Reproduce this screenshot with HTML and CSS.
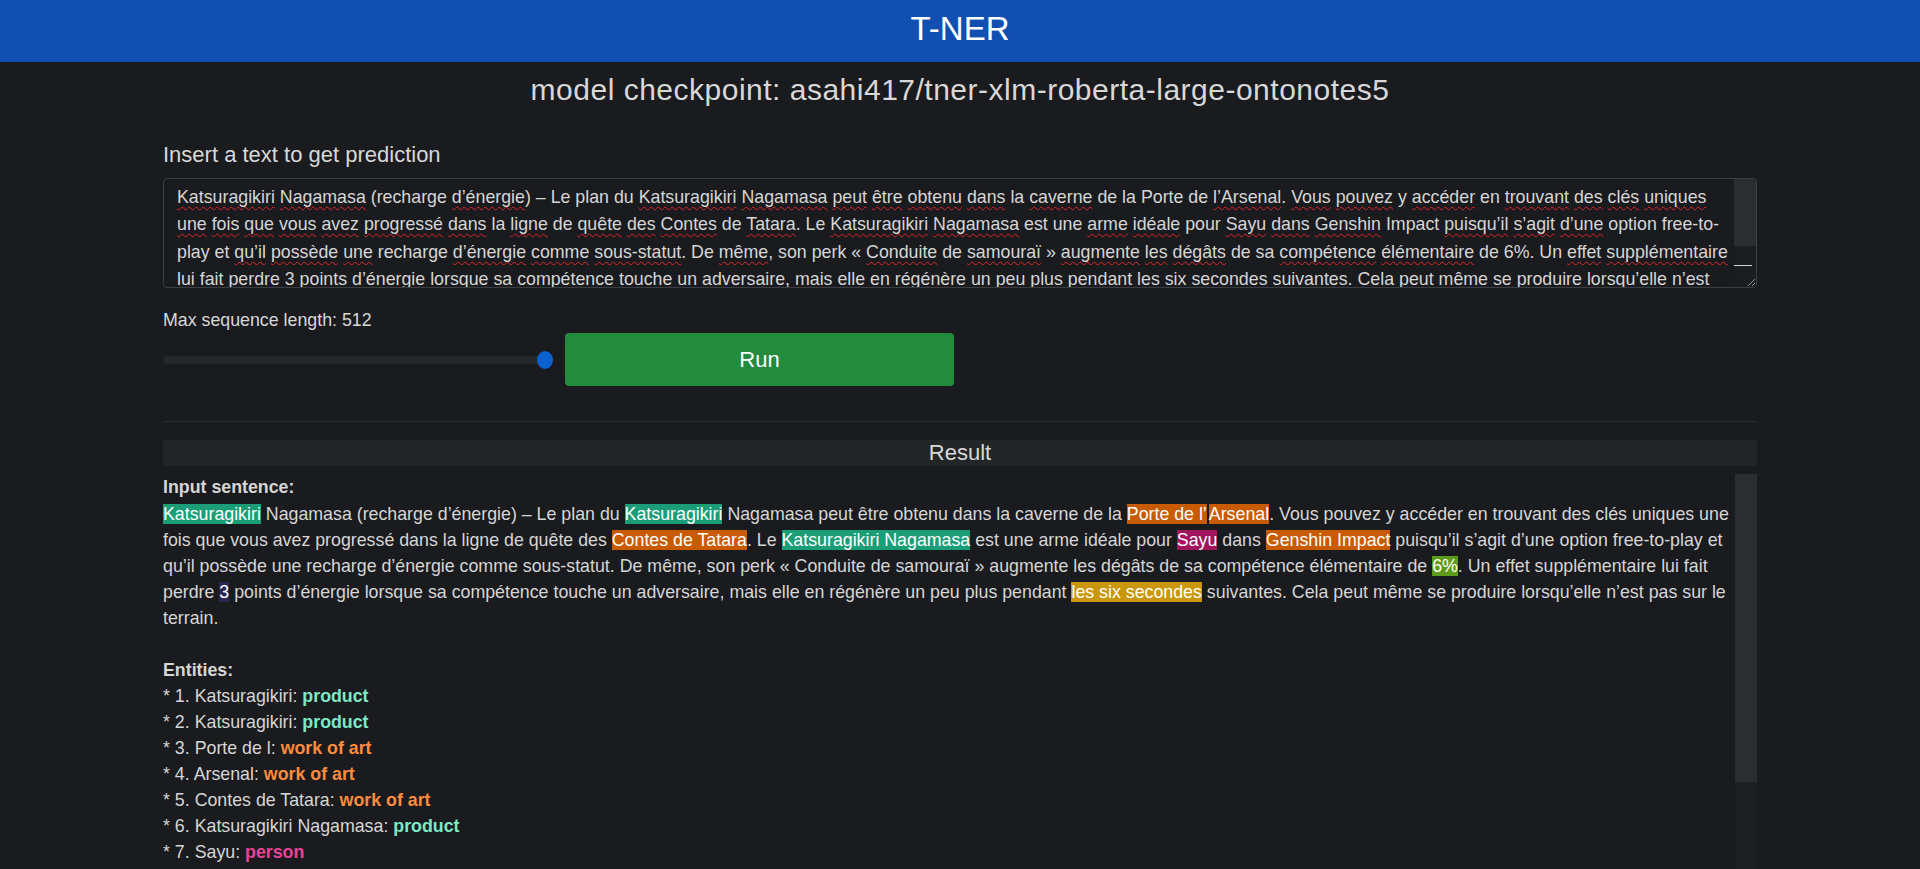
FILE: index.html
```html
<!DOCTYPE html>
<html lang="fr">
<head>
<meta charset="utf-8">
<title>T-NER</title>
<link rel="stylesheet" href="styles.css">
</head>
<body>
<header class="topbar"><h1 class="brand">T-NER</h1></header>
<main class="container">
  <h2 class="checkpoint">model checkpoint: asahi417/tner-xlm-roberta-large-ontonotes5</h2>
  <label class="field-label" id="txt-label">Insert a text to get prediction</label>
  <div class="textbox">
    <div class="textbox-content" role="textbox" aria-multiline="true" aria-labelledby="txt-label" contenteditable="true" spellcheck="false"><span class="sp">Katsuragikiri</span> <span class="sp">Nagamasa</span> (recharge <span class="sp">d’énergie</span>) – Le plan du <span class="sp">Katsuragikiri</span> <span class="sp">Nagamasa</span> <span class="sp">peut</span> <span class="sp">être</span> <span class="sp">obtenu</span> <span class="sp">dans</span> la <span class="sp">caverne</span> de la Porte de <span class="sp">l’Arsenal</span>. <span class="sp">Vous</span> <span class="sp">pouvez</span> y <span class="sp">accéder</span> en <span class="sp">trouvant</span> <span class="sp">des</span> <span class="sp">clés</span> <span class="sp">uniques</span> <span class="sp">une</span> <span class="sp">fois</span> <span class="sp">que</span> <span class="sp">vous</span> <span class="sp">avez</span> <span class="sp">progressé</span> <span class="sp">dans</span> la <span class="sp">ligne</span> de <span class="sp">quête</span> <span class="sp">des</span> <span class="sp">Contes</span> de <span class="sp">Tatara</span>. Le <span class="sp">Katsuragikiri</span> <span class="sp">Nagamasa</span> est une <span class="sp">arme</span> <span class="sp">idéale</span> pour <span class="sp">Sayu</span> <span class="sp">dans</span> <span class="sp">Genshin</span> Impact <span class="sp">puisqu’il</span> <span class="sp">s’agit</span> <span class="sp">d’une</span> option free-to-play et <span class="sp">qu’il</span> <span class="sp">possède</span> <span class="sp">une</span> recharge <span class="sp">d’énergie</span> <span class="sp">comme</span> <span class="sp">sous-statut</span>. De <span class="sp">même</span>, son perk « <span class="sp">Conduite</span> de <span class="sp">samouraï</span> » <span class="sp">augmente</span> <span class="sp">les</span> <span class="sp">dégâts</span> de sa <span class="sp">compétence</span> <span class="sp">élémentaire</span> de 6%. Un <span class="sp">effet</span> <span class="sp">supplémentaire</span> <span class="sp">lui</span> <span class="sp">fait</span> <span class="sp">perdre</span> 3 points <span class="sp">d’énergie</span> <span class="sp">lorsque</span> sa <span class="sp">compétence</span> touche un <span class="sp">adversaire</span>, <span class="sp">mais</span> <span class="sp">elle</span> en <span class="sp">régénère</span> un <span class="sp">peu</span> plus pendant <span class="sp">les</span> six <span class="sp">secondes</span> <span class="sp">suivantes</span>. <span class="sp">Cela</span> <span class="sp">peut</span> <span class="sp">même</span> se <span class="sp">produire</span> <span class="sp">lorsqu’elle</span> <span class="sp">n’est</span> pas sur le <span class="sp">terrain</span>.</div>
    <div class="vscroll vscroll-text">
      <div class="vscroll-thumb"></div>
      <div class="vscroll-track">
        <div class="vscroll-mark"></div>
        <svg class="resizer" width="10" height="10" viewBox="0 0 10 10"><path d="M9 2 L2 9 M9 6 L6 9" stroke="#8a8c90" stroke-width="1" fill="none"/></svg>
      </div>
    </div>
  </div>
  <div class="seq-label">Max sequence length: 512</div>
  <div class="controls">
    <div class="slider"><div class="slider-track"></div><div class="slider-thumb"></div></div>
    <button class="run-btn" type="button">Run</button>
  </div>
  <hr class="divider">
  <div class="result-bar">Result</div>
  <div class="result-body">
    <p class="result-text">
      <strong class="section-title">Input sentence:</strong>
      <span class="hl hl-product">Katsuragikiri</span> Nagamasa (recharge d’énergie) – Le plan du <span class="hl hl-product">Katsuragikiri</span> Nagamasa peut être obtenu dans la caverne de la <span class="hl hl-art">Porte de l’</span><span class="hl hl-art hl-join">Arsenal</span>. Vous pouvez y accéder en trouvant des clés uniques une fois que vous avez progressé dans la ligne de quête des <span class="hl hl-art">Contes de Tatara</span>. Le <span class="hl hl-product">Katsuragikiri Nagamasa</span> est une arme idéale pour <span class="hl hl-person">Sayu</span> dans <span class="hl hl-art">Genshin Impact</span> puisqu’il s’agit d’une option free-to-play et qu’il possède une recharge d’énergie comme sous-statut. De même, son perk « Conduite de samouraï » augmente les dégâts de sa compétence élémentaire de <span class="hl hl-percent">6%</span>. Un effet supplémentaire lui fait perdre <span class="hl hl-cardinal">3</span> points d’énergie lorsque sa compétence touche un adversaire, mais elle en régénère un peu plus pendant <span class="hl hl-time">les six secondes</span> suivantes. Cela peut même se produire lorsqu’elle n’est pas sur le terrain.<br>
      <br>
      <strong>Entities:</strong><br>
      * 1. Katsuragikiri: <b class="lbl-product">product</b><br>
      * 2. Katsuragikiri: <b class="lbl-product">product</b><br>
      * 3. Porte de l: <b class="lbl-art">work of art</b><br>
      * 4. Arsenal: <b class="lbl-art">work of art</b><br>
      * 5. Contes de Tatara: <b class="lbl-art">work of art</b><br>
      * 6. Katsuragikiri Nagamasa: <b class="lbl-product">product</b><br>
      * 7. Sayu: <b class="lbl-person">person</b><br>
      * 8. Genshin Impact: <b class="lbl-art">work of art</b><br>
      * 9. 6%: <b class="lbl-percent">percent</b><br>
      * 10. 3: <b class="lbl-cardinal">cardinal</b><br>
      * 11. les six secondes: <b class="lbl-time">time</b>
    </p>
    <div class="vscroll vscroll-result">
      <div class="vscroll-thumb"></div>
      <div class="vscroll-track"></div>
    </div>
  </div>
</main>
</body>
</html>
```
FILE: styles.css
```css
html, body {
  margin: 0;
  padding: 0;
  overflow: hidden;
}
body {
  background: #1a1b1e;
  color: #d4d4d4;
  font-family: "Liberation Sans", Arial, sans-serif;
}
.topbar {
  height: 62px;
  background: #1150b2;
  display: flex;
  align-items: center;
  justify-content: center;
}
.brand {
  margin: 0;
  font-weight: 400;
  font-size: 33px;
  color: #ffffff;
  line-height: 1;
  position: relative;
  top: -3px;
}
.container {
  width: 1594px;
  margin: 0 auto;
  display: flex;
  flex-direction: column;
}
.checkpoint {
  margin: 12px 0 0;
  text-align: center;
  font-weight: 400;
  font-size: 30px;
  letter-spacing: 0.5px;
  line-height: 32px;
  color: #d8d8d8;
}
.field-label {
  margin-top: 37px;
  font-size: 22px;
  line-height: 24px;
  color: #d8d8d8;
}
.textbox {
  margin-top: 11px;
  box-sizing: border-box;
  height: 110px;
  border: 1px solid #3b3e42;
  border-radius: 4px;
  display: flex;
  overflow: hidden;
  background: #1a1b1e;
}
.textbox-content {
  flex: 1;
  min-width: 0;
  padding: 5px 0 0 13px;
  overflow: hidden;
  color: #d6d6d6;
  font-size: 17.8px;
  line-height: 27.3px;
  outline: none;
}
.sp {
  text-decoration: underline wavy #e0242a;
  text-decoration-thickness: 1px;
  text-underline-offset: 3px;
  text-decoration-skip-ink: none;
}
.vscroll {
  width: 22px;
  flex: none;
  display: flex;
  flex-direction: column;
}
.vscroll-thumb {
  background: #2c2d30;
}
.vscroll-track {
  flex: 1;
  background: #1c1d20;
  display: flex;
  flex-direction: column;
  align-items: flex-end;
}
.vscroll-text .vscroll-thumb {
  height: 67px;
}
.vscroll-mark {
  margin-top: 19px;
  width: 18px;
  align-self: flex-start;
  height: 1px;
  background: #cfd0d2;
}
.resizer {
  margin-top: auto;
  display: block;
}
.vscroll-result .vscroll-thumb {
  height: 308px;
}
.vscroll-result .vscroll-track {
  background: #1d1e21;
}
.seq-label {
  margin-top: 22px;
  font-size: 17.8px;
  line-height: 20px;
  color: #d8d8d8;
}
.controls {
  margin-top: 3px;
  display: flex;
  align-items: center;
  gap: 12px;
  height: 53px;
}
.slider {
  position: relative;
  width: 390px;
  height: 18px;
  display: flex;
  align-items: center;
}
.slider-track {
  width: 100%;
  height: 8px;
  border-radius: 4px;
  background: #25272a;
}
.slider-thumb {
  position: absolute;
  right: 0;
  top: 0;
  width: 16px;
  height: 18px;
  border-radius: 50%;
  background: #0b62d0;
}
.run-btn {
  width: 389px;
  height: 53px;
  background: #228b3c;
  color: #ffffff;
  border: none;
  border-radius: 4px;
  font-family: "Liberation Sans", Arial, sans-serif;
  font-size: 22px;
}
.divider {
  margin: 35px 0 0;
  border: none;
  border-top: 1px solid #2a2c2f;
  height: 0;
}
.result-bar {
  margin-top: 18px;
  height: 26px;
  background: #232627;
  text-align: center;
  font-size: 22px;
  line-height: 26px;
  color: #d8d8d8;
}
.result-body {
  margin-top: 8px;
  height: 400px;
  display: flex;
  overflow: hidden;
}
.result-text {
  flex: 1;
  min-width: 0;
  margin: 0;
  font-size: 17.8px;
  line-height: 26px;
  color: #d6d6d6;
}
.section-title {
  display: block;
  font-weight: 700;
  margin-bottom: 1px;
}
.result-text strong {
  font-weight: 700;
}
.hl {
  color: #ffffff;
}
.hl-join { margin-left: 2px; }
.hl-product { background: #1b9e77; }
.hl-art { background: #c85b00; }
.hl-person { background: #a0155d; }
.hl-percent { background: #5f9b1a; }
.hl-cardinal { background: #2b2850; }
.hl-time { background: #c9980a; }
.lbl-product { color: #7de8c5; }
.lbl-art { color: #ff8c3c; }
.lbl-person { color: #e8439a; }
.lbl-percent { color: #8bc34a; }
.lbl-cardinal { color: #9c95e0; }
.lbl-time { color: #f2c12e; }
```
